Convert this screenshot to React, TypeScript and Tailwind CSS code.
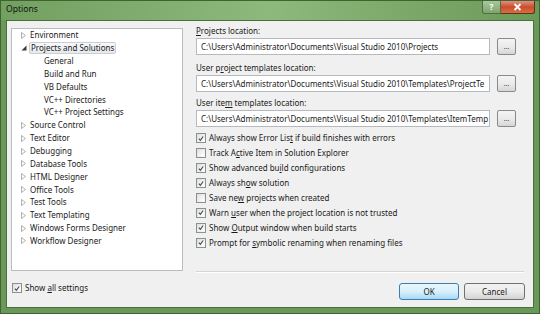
import React from 'react';

const FONT = { fontFamily: '"Noto Sans", "Open Sans", sans-serif' };

function Arrow({ open }: { open?: boolean }) {
  if (open) {
    return (
      <svg width="6" height="6" viewBox="0 0 6 6" className="shrink-0">
        <path d="M5.5 0.5 L5.5 5.5 L0.5 5.5 Z" fill="#3a3a3a" />
      </svg>
    );
  }
  return (
    <svg width="5" height="7" viewBox="0 0 5 7" className="shrink-0">
      <path d="M0.5 0.5 L4.5 3.5 L0.5 6.5 Z" fill="none" stroke="#a6a6a6" strokeWidth="0.9" />
    </svg>
  );
}

function Check({ on }: { on?: boolean }) {
  return (
    <div className="w-[10px] h-[10px] shrink-0 border border-[#8e8f8f] bg-gradient-to-br from-[#dcdcdc] to-[#fbfbfb] p-[1px]">
      <div className="w-full h-full bg-gradient-to-br from-[#e4e4e4] to-[#ffffff] flex items-center justify-center">
        {on && (
          <svg width="7" height="7" viewBox="0 0 7 7">
            <path d="M1 3.6 L2.8 5.6 L6 1.2" fill="none" stroke="#3a4a5c" strokeWidth="1.3" />
          </svg>
        )}
      </div>
    </div>
  );
}

function U({ children }: { children: React.ReactNode }) {
  return <span className="underline underline-offset-[1px]">{children}</span>;
}

function Browse() {
  return (
    <div className="w-[19px] h-[17px] shrink-0 rounded-[2px] border border-[#8a8a8a] bg-gradient-to-b from-[#f4f4f4] via-[#ebebeb] to-[#d6d6d6] flex items-center justify-center text-[7px] leading-none text-[#444] pb-[1px]">
      ...
    </div>
  );
}

function Field({ value }: { value: string }) {
  return (
    <div className="flex items-center gap-[7px]">
      <div className="w-[294px] h-[17px] shrink-0 bg-white border border-[#b5b9c0] flex items-center pl-[4px] overflow-hidden whitespace-nowrap text-[8px] text-[#1a1a1a]">
        {value}
      </div>
      <Browse />
    </div>
  );
}

const tree: { label: string; level: number; open?: boolean; selected?: boolean }[] = [
  { label: 'Environment', level: 0 },
  { label: 'Projects and Solutions', level: 0, open: true, selected: true },
  { label: 'General', level: 1 },
  { label: 'Build and Run', level: 1 },
  { label: 'VB Defaults', level: 1 },
  { label: 'VC++ Directories', level: 1 },
  { label: 'VC++ Project Settings', level: 1 },
  { label: 'Source Control', level: 0 },
  { label: 'Text Editor', level: 0 },
  { label: 'Debugging', level: 0 },
  { label: 'Database Tools', level: 0 },
  { label: 'HTML Designer', level: 0 },
  { label: 'Office Tools', level: 0 },
  { label: 'Test Tools', level: 0 },
  { label: 'Text Templating', level: 0 },
  { label: 'Windows Forms Designer', level: 0 },
  { label: 'Workflow Designer', level: 0 },
];

const options: { on: boolean; label: React.ReactNode }[] = [
  { on: true, label: <>Always show Error Lis<U>t</U> if build finishes with errors</> },
  { on: false, label: <>Track A<U>c</U>tive Item in Solution Explorer</> },
  { on: true, label: <>Show advanced bu<U>i</U>ld configurations</> },
  { on: true, label: <>Always sh<U>o</U>w solution</> },
  { on: false, label: <>Save ne<U>w</U> projects when created</> },
  { on: true, label: <>Warn <U>u</U>ser when the project location is not trusted</> },
  { on: true, label: <>Show <U>O</U>utput window when build starts</> },
  { on: true, label: <>Prompt for <U>s</U>ymbolic renaming when renaming files</> },
];

export default function App() {
  return (
    <div
      className="w-[540px] h-[314px] overflow-hidden flex flex-col bg-[#6a9858] border border-[#3f6432] text-[#1a1a1a]"
      style={FONT}
    >
      {/* Title bar */}
      <div className="h-[19px] shrink-0 flex items-start justify-between bg-gradient-to-r from-[#72a061] via-[#8db97c] to-[#6a9a58]">
        <div className="pl-[5px] pt-[4px] text-[8.6px] leading-none text-[#111]">Options</div>
        <div className="flex mr-[4px]">
          <div className="w-[19px] h-[13px] border border-[#4d6e41] border-t-0 rounded-bl-[3px] bg-gradient-to-b from-[#a9c89b] to-[#7ea56e] flex items-center justify-center text-[8px] font-bold leading-none text-white">
            ?
          </div>
          <div className="w-[34px] h-[13px] border border-[#6b2a20] border-t-0 border-l-0 rounded-br-[3px] bg-gradient-to-b from-[#e0907a] via-[#cc4a32] to-[#d2743a] flex items-center justify-center">
            <svg width="9" height="8" viewBox="0 0 9 8">
              <path d="M1.5 1 L7.5 7 M7.5 1 L1.5 7" stroke="#fff" strokeWidth="1.8" />
            </svg>
          </div>
        </div>
      </div>

      {/* Client area */}
      <div className="flex-1 mx-[5px] mb-[5px] border border-[#4b6f3e] bg-[#f0f0f0] flex">
        {/* Left column */}
        <div className="ml-[4px] mt-[7px] w-[172px] flex flex-col">
          <div className="h-[243px] bg-white border border-[#b9bcc1]">
            {tree.map((t) => (
              <div key={t.label} className="h-[12.85px] flex items-center text-[8px] leading-none whitespace-nowrap">
                {t.level === 0 ? (
                  <>
                    <div className="w-[17px] pl-[9px] flex items-center">
                      <Arrow open={t.open} />
                    </div>
                    <span
                      className={
                        t.selected
                          ? 'px-[1px] h-[12px] flex items-center border border-[#c9ced5] rounded-[2px] bg-gradient-to-b from-[#f7f8f9] to-[#e6e9ed]'
                          : 'px-[1px]'
                      }
                    >
                      {t.label}
                    </span>
                  </>
                ) : (
                  <span className="pl-[32px]">{t.label}</span>
                )}
              </div>
            ))}
          </div>
          <div className="mt-[12px] ml-[1px] flex items-center gap-[3px] text-[8px] leading-none">
            <Check on />
            <span>
              Show <U>a</U>ll settings
            </span>
          </div>
        </div>

        {/* Right column */}
        <div className="ml-[13px] w-[329px] flex flex-col pt-[4px] text-[8px] leading-none">
          <div className="h-[12px] flex items-center">
            <span><U>P</U>rojects location:</span>
          </div>
          <div className="mt-[1px]">
            <Field value="C:\Users\Administrator\Documents\Visual Studio 2010\Projects" />
          </div>
          <div className="mt-[7px] h-[12px] flex items-center">
            <span>User p<U>r</U>oject templates location:</span>
          </div>
          <div className="mt-[1px]">
            <Field value="C:\Users\Administrator\Documents\Visual Studio 2010\Templates\ProjectTe" />
          </div>
          <div className="mt-[5px] h-[12px] flex items-center">
            <span>User ite<U>m</U> templates location:</span>
          </div>
          <div className="mt-[1px]">
            <Field value="C:\Users\Administrator\Documents\Visual Studio 2010\Templates\ItemTemp" />
          </div>
          <div className="mt-[4px] flex flex-col">
            {options.map((o, i) => (
              <div key={i} className="h-[14.9px] flex items-center gap-[3px] whitespace-nowrap">
                <Check on={o.on} />
                <span>{o.label}</span>
              </div>
            ))}
          </div>
          <div className="mt-[21px] w-[328px] h-[2px] border-t border-[#d5d5d5] border-b border-b-white" />
          <div className="mt-[10px] flex justify-end gap-[5px]">
            <div className="w-[60px] h-[17px] rounded-[3px] border border-[#3c7fb1] bg-gradient-to-b from-[#eaf6fd] via-[#d9f0fc] to-[#a7d9f5] flex items-center justify-center">
              OK
            </div>
            <div className="w-[61px] h-[17px] rounded-[3px] border border-[#707070] bg-gradient-to-b from-[#f2f2f2] via-[#ebebeb] to-[#d3d3d3] flex items-center justify-center">
              Cancel
            </div>
          </div>
        </div>
      </div>
    </div>
  );
}
